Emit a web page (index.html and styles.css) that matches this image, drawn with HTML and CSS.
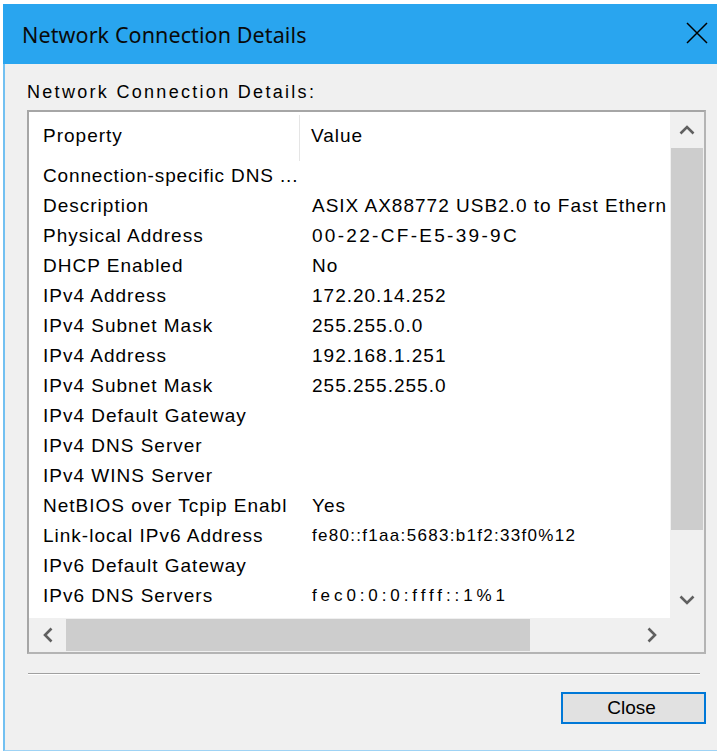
FILE: index.html
```html
<!DOCTYPE html>
<html>
<head>
<meta charset="utf-8">
<title>Network Connection Details</title>
<link rel="stylesheet" href="styles.css">
</head>
<body>
<div class="window">
  <div class="titlebar">
    <span class="title">Network Connection Details</span>
    <svg class="close-x" width="22" height="22" viewBox="0 0 22 22">
      <path d="M1 1 L21 21 M21 1 L1 21" stroke="#000" stroke-width="1.5" fill="none"/>
    </svg>
  </div>
  <div class="client">
    <div class="label">Network Connection Details:</div>
    <div class="listbox">
      <div class="view">
        <div class="row head"><div class="c1">Property</div><div class="c2">Value</div></div>
        <div class="row"><div class="c1 tight">Connection-specific DNS ...</div><div class="c2"></div></div>
        <div class="row"><div class="c1">Description</div><div class="c2">ASIX AX88772 USB2.0 to Fast Ethern</div></div>
        <div class="row"><div class="c1">Physical Address</div><div class="c2 mac">00-22-CF-E5-39-9C</div></div>
        <div class="row"><div class="c1">DHCP Enabled</div><div class="c2">No</div></div>
        <div class="row"><div class="c1">IPv4 Address</div><div class="c2">172.20.14.252</div></div>
        <div class="row"><div class="c1">IPv4 Subnet Mask</div><div class="c2">255.255.0.0</div></div>
        <div class="row"><div class="c1">IPv4 Address</div><div class="c2">192.168.1.251</div></div>
        <div class="row"><div class="c1">IPv4 Subnet Mask</div><div class="c2">255.255.255.0</div></div>
        <div class="row"><div class="c1">IPv4 Default Gateway</div><div class="c2"></div></div>
        <div class="row"><div class="c1">IPv4 DNS Server</div><div class="c2"></div></div>
        <div class="row"><div class="c1">IPv4 WINS Server</div><div class="c2"></div></div>
        <div class="row"><div class="c1">NetBIOS over Tcpip Enabl</div><div class="c2">Yes</div></div>
        <div class="row"><div class="c1">Link-local IPv6 Address</div><div class="c2 ip6">fe80::f1aa:5683:b1f2:33f0%12</div></div>
        <div class="row"><div class="c1">IPv6 Default Gateway</div><div class="c2"></div></div>
        <div class="row"><div class="c1">IPv6 DNS Servers</div><div class="c2 ip6 wide">fec0:0:0:ffff::1%1</div></div>
      </div>
      <div class="vscroll">
        <div class="sbtn">
          <svg width="16" height="10" viewBox="0 0 16 10"><path d="M1.5 8.5 L8 2 L14.5 8.5" stroke="#606060" stroke-width="2.6" fill="none"/></svg>
        </div>
        <div class="vthumb"></div>
        <div class="track"></div>
        <div class="sbtn">
          <svg width="16" height="10" viewBox="0 0 16 10"><path d="M1.5 1.5 L8 8 L14.5 1.5" stroke="#606060" stroke-width="2.6" fill="none"/></svg>
        </div>
      </div>
      <div class="hscroll">
        <div class="hbtn left">
          <svg width="10" height="16" viewBox="0 0 10 16"><path d="M8.5 1.5 L2 8 L8.5 14.5" stroke="#606060" stroke-width="2.6" fill="none"/></svg>
        </div>
        <div class="hthumb"></div>
        <div class="track"></div>
        <div class="hbtn right">
          <svg width="10" height="16" viewBox="0 0 10 16"><path d="M1.5 1.5 L8 8 L1.5 14.5" stroke="#606060" stroke-width="2.6" fill="none"/></svg>
        </div>
      </div>
      <div class="corner"></div>
    </div>
    <div class="sep"></div>
    <div class="footer">
      <button class="btn">Close</button>
    </div>
  </div>
</div>
</body>
</html>
```

FILE: styles.css
```css
html, body {
  margin: 0;
  padding: 0;
  background: #ffffff;
  overflow: hidden;
}

.window {
  margin: 4px 0 0 3px;
  width: 716px;
  display: flex;
  flex-direction: column;
}

.titlebar {
  height: 60px;
  background: #29a5ef;
  display: flex;
  align-items: center;
  justify-content: space-between;
  padding: 0 11px 0 19px;
}

.title {
  font-family: "Noto Sans", "Liberation Sans", sans-serif;
  font-size: 21.5px;
  color: #0a0a0a;
  letter-spacing: 0.1px;
}

.close-x {
  display: block;
  margin-top: -2px;
}

.client {
  height: 687px;
  background: #f0f0f0;
  border-left: 2px solid #72c0f1;
  border-bottom: 1px solid #9fd3f5;
  padding: 18px 0 0 22px;
  box-sizing: border-box;
  font-family: "Liberation Sans", Arial, sans-serif;
  color: #000;
}

.label {
  font-size: 18px;
  line-height: 20px;
  letter-spacing: 2.3px;
}

.listbox {
  margin-top: 8px;
  width: 679px;
  height: 544px;
  box-sizing: border-box;
  border: 2px solid #a6a6a6;
  border-right-color: #b4b4b4;
  border-bottom-color: #b4b4b4;
  background: #ffffff;
  display: grid;
  grid-template-columns: 641px 34px;
  grid-template-rows: 506px 34px;
}

.view {
  overflow: hidden;
  font-size: 19px;
  letter-spacing: 1px;
}

.row {
  display: flex;
  height: 30px;
  align-items: center;
  white-space: nowrap;
}

.row.head {
  height: 49px;
  align-items: stretch;
}

.c1 {
  width: 271px;
  flex: none;
  padding-left: 14px;
  box-sizing: border-box;
}

.c1.tight {
  letter-spacing: 0.85px;
}

.c2 {
  padding-left: 12px;
}

.head .c1 {
  display: flex;
  align-items: center;
  border-right: 1px solid #e5e5e5;
  margin: 3px 0 0 0;
  padding-bottom: 5px;
}

.head .c2 {
  display: flex;
  align-items: center;
  padding-left: 11px;
  padding-bottom: 2px;
}

.mac {
  letter-spacing: 2.3px;
}

.ip6 {
  font-size: 17px;
  letter-spacing: 1.3px;
}

.ip6.wide {
  letter-spacing: 3.9px;
}

.vscroll {
  background: #f0f0f0;
  display: flex;
  flex-direction: column;
}

.sbtn {
  height: 36px;
  flex: none;
  display: flex;
  align-items: center;
  justify-content: center;
}

.vthumb {
  height: 382px;
  flex: none;
  margin: 0 1px;
  background: #cdcdcd;
}

.track {
  flex: 1;
}

.hscroll {
  background: #f0f0f0;
  display: flex;
}

.hbtn {
  width: 37px;
  flex: none;
  display: flex;
  align-items: center;
  justify-content: center;
}

.hthumb {
  width: 464px;
  flex: none;
  margin: 1px 0;
  background: #cdcdcd;
}

.corner {
  background: #f0f0f0;
}

.sep {
  margin-top: 19px;
  width: 672px;
  margin-left: 1px;
  height: 1px;
  background: #a0a0a0;
  border-bottom: 1px solid #ffffff;
}

.footer {
  margin-top: 17px;
  width: 679px;
  display: flex;
  justify-content: flex-end;
}

.btn {
  width: 145px;
  height: 32px;
  box-sizing: border-box;
  border: 2px solid #0078d7;
  background: #e1e1e1;
  font-family: "Liberation Sans", Arial, sans-serif;
  font-size: 19px;
  color: #000;
  padding: 0 4px 0 0;
  margin: 0;
}
```
